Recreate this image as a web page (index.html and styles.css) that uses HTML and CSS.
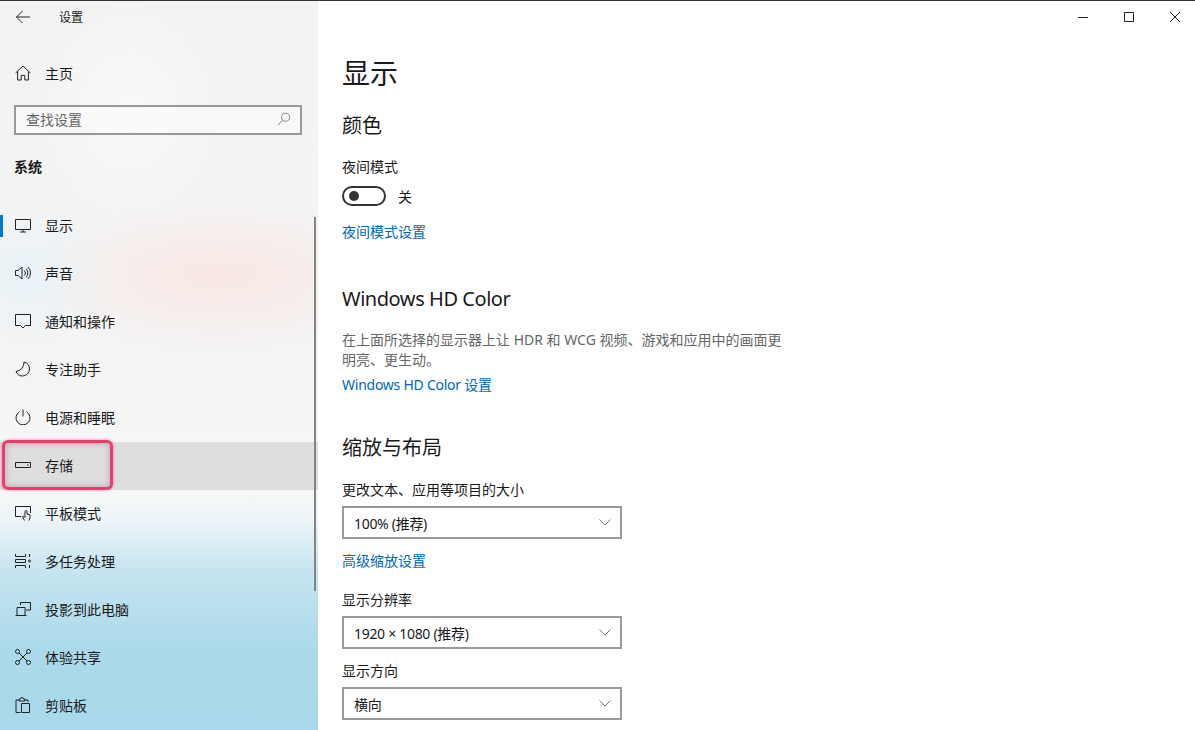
FILE: index.html

```html
<!DOCTYPE html>
<html lang="zh-CN">
    <head>
        <meta charset="UTF-8" />
        <title>设置</title>
        <link rel="stylesheet" href="styles.css">
    </head>
    <body>
        <div class="okno">
            <div class="bok">
                <div class="titulek">
                    <svg class="zpet" width="16" height="16" viewBox="0 0 16 16"><path d="M15 8H1.5M7.5 2 1.5 8l6 6"/></svg>
                    <span>设置</span>
                </div>
                <div class="polozka domu">
                    <svg viewBox="0 0 16 16"><path d="M.6 8 8 1l7.4 7M2.6 6.4V15h3.6v-4.6h3.6V15h3.6V6.4"/></svg>
                    <span>主页</span>
                </div>
                <div class="hledat">
                    <span>查找设置</span>
                    <svg viewBox="0 0 16 16"><circle cx="9.8" cy="6" r="4.6"/><path d="M6.5 9.3 1 15"/></svg>
                </div>
                <div class="skupina">系统</div>
                <div class="menu">
                    <div class="polozka aktivni">
                        <svg viewBox="0 0 16 16"><path d="M.5 2.5h15v10H.5zM8 12.5v2.5M5 15h6"/></svg>
                        <span>显示</span>
                    </div>
                    <div class="polozka">
                        <svg viewBox="0 0 16 16"><path d="M.5 5.500h2.500L7 2v12l-4-3.500H.5zM9.300 5.500a3.500 3.500 0 0 1 0 5M11 3.700a6 6 0 0 1 0 8.600M13 2a8.500 8.500 0 0 1 0 12"/></svg>
                        <span>声音</span>
                    </div>
                    <div class="polozka">
                        <svg viewBox="0 0 16 16"><path d="M.5 1.500h15v11h-5L8 15l-2.500-2.500h-5z"/></svg>
                        <span>通知和操作</span>
                    </div>
                    <div class="polozka">
                        <svg viewBox="0 0 16 16"><path d="M9 1a7.300 7.300 0 0 1 5.500 7 7 7 0 0 1-7 7 7.200 7.200 0 0 1-6.500-4.500A9 9 0 0 0 9 1z"/></svg>
                        <span>专注助手</span>
                    </div>
                    <div class="polozka">
                        <svg viewBox="0 0 16 16"><path d="M4.500 2.800a7 7 0 1 0 7 0M8 .5v7"/></svg>
                        <span>电源和睡眠</span>
                    </div>
                    <div class="polozka vybrana">
                        <svg viewBox="0 0 16 16"><path d="M.5 5.500h15v5H.5zM12 8h1.500"/></svg>
                        <span>存储</span>
                    </div>
                    <div class="polozka">
                        <svg viewBox="0 0 16 16"><path d="M6 11.500H.5v-10h15V8M9.500 15.500 7.500 11.500l1-.5 1.500 1.500V6.500a1 1 0 0 1 2 0V9l3 .8V13l-1 2.500"/></svg>
                        <span>平板模式</span>
                    </div>
                    <div class="polozka">
                        <svg viewBox="0 0 16 16"><path d="M.5 1v2.500h10V1M.5 15v-2.500h10V15M.5 6.500h10v3H.5zM14.500 1v3M14.500 12v3"/><circle cx="14.500" cy="8" r="1"/></svg>
                        <span>多任务处理</span>
                    </div>
                    <div class="polozka">
                        <svg viewBox="0 0 16 16"><path d="M5.500 4V1.500h10V9H11M.5 14.500h11M2 14.500V6.500h8v8"/></svg>
                        <span>投影到此电脑</span>
                    </div>
                    <div class="polozka">
                        <svg viewBox="0 0 16 16"><circle cx="2.500" cy="2.500" r="2"/><circle cx="13.500" cy="2.500" r="2"/><circle cx="2.500" cy="13.500" r="2"/><circle cx="13.500" cy="13.500" r="2"/><path d="m4 4 8 8M12 4l-8 8"/></svg>
                        <span>体验共享</span>
                    </div>
                    <div class="polozka">
                        <svg viewBox="0 0 16 16"><path d="M5.500 15.500H1V3h3M10 3h3v2M4 4V2h1.500a1.500 1.500 0 0 1 3 0H10v2zM6.500 6.500h8v9h-8z"/></svg>
                        <span>剪贴板</span>
                    </div>
                </div>
                <div class="posuvnik"></div>
                <div class="ramecek"></div>
            </div>

            <div class="obsah">
                <div class="ovladani">
                    <svg viewBox="0 0 12 12"><path d="M1 6.500h10"/></svg>
                    <svg viewBox="0 0 12 12"><path d="M1.500 1.500h9v9h-9z"/></svg>
                    <svg viewBox="0 0 12 12"><path d="m1 1 10 10M11 1 1 11"/></svg>
                </div>

                <h1>显示</h1>
                <h2 class="prvni">颜色</h2>
                <p class="popisek noc">夜间模式</p>
                <div class="prepinac">
                    <span class="kolejnice"><span class="tecka"></span></span>
                    <span>关</span>
                </div>
                <a class="odkaz" href="#">夜间模式设置</a>

                <h2 class="hd">Windows HD Color</h2>
                <p class="text">在上面所选择的显示器上让 HDR 和 WCG 视频、游戏和应用中的画面更明亮、更生动。</p>
                <a class="odkaz hned" href="#">Windows HD Color 设置</a>

                <h2 class="rozlozeni">缩放与布局</h2>
                <p class="popisek velikost">更改文本、应用等项目的大小</p>
                <div class="vyber">
                    <span>100% (推荐)</span>
                    <svg viewBox="0 0 12 7"><path d="m.5.5 5.500 5.500L11.500.5"/></svg>
                </div>
                <a class="odkaz pokrocile" href="#">高级缩放设置</a>
                <p class="popisek rozliseni">显示分辨率</p>
                <div class="vyber">
                    <span>1920 × 1080 (推荐)</span>
                    <svg viewBox="0 0 12 7"><path d="m.5.5 5.500 5.500L11.500.5"/></svg>
                </div>
                <p class="popisek smer">显示方向</p>
                <div class="vyber">
                    <span>横向</span>
                    <svg viewBox="0 0 12 7"><path d="m.5.5 5.500 5.500L11.500.5"/></svg>
                </div>
            </div>
        </div>
    </body>
</html>
```

FILE: styles.css

```css
body {
    margin: 0;
    font-family: "Noto Sans", "Noto Sans CJK SC", sans-serif;
    font-size: 14px;
    color: #1a1a1a;
    background-color: #fff;
}

svg {
    fill: none;
    stroke: #222;
    stroke-width: 1;
}

.okno {
    display: flex;
    height: 729px;
    overflow: hidden;
    border-top: 1px solid #333;
}

/* levy panel */
.bok {
    position: relative;
    flex: 0 0 318px;
    background:
        radial-gradient(ellipse 190px 75px at 220px 275px, #f8e7e3, rgba(248, 231, 227, 0)),
        radial-gradient(ellipse 90px 70px at 30px 275px, #e8f2f8, rgba(232, 242, 248, 0)),
        radial-gradient(ellipse 90px 110px at 130px 110px, #f9f9f7, rgba(249, 249, 247, 0)),
        linear-gradient(#f3f3f3 0, #f4f4f4 380px, #f8f8f8 480px, #eff6f8 515px, #c6e4f0 570px, #abd9ea 650px, #a9d8ea 100%);
}

.titulek {
    display: flex;
    align-items: center;
    height: 32px;
    padding-left: 15px;
    font-size: 12px;
}
.titulek span {
    margin-left: 28px;
}

.polozka {
    display: flex;
    align-items: center;
    height: 48px;
    padding-left: 15px;
}
.polozka svg {
    flex: none;
    width: 16px;
    height: 16px;
    margin-right: 14px;
    margin-bottom: 2px;
}
.polozka span {
    line-height: 20px;
}

.domu {
    height: 50px;
    margin-top: 16px;
    margin-bottom: 6px;
}

.hledat {
    display: flex;
    align-items: center;
    justify-content: space-between;
    box-sizing: border-box;
    width: 288px;
    height: 30px;
    margin-left: 14px;
    padding: 0 9px 2px 10px;
    border: 2px solid #999;
    background-color: #f9f9f9;
    color: #666;
}
.hledat svg {
    width: 14px;
    height: 14px;
    stroke: #777;
}

.skupina {
    margin: 22px 0 0 14px;
    height: 29px;
    line-height: 20px;
    font-weight: 700;
}

.menu {
    margin-top: 16px;
}

.aktivni {
    position: relative;
}
.aktivni::before {
    content: "";
    position: absolute;
    left: 0;
    top: 13px;
    width: 3px;
    height: 22px;
    background-color: #0078d7;
}

.vybrana {
    background-color: #dedede;
}

.posuvnik {
    position: absolute;
    left: 314px;
    top: 216px;
    width: 2px;
    height: 374px;
    background-color: #848484;
}

.ramecek {
    position: absolute;
    left: 2px;
    top: 439px;
    width: 111px;
    height: 50px;
    box-sizing: border-box;
    border: 3px solid #ee3a6f;
    border-radius: 6px;
    box-shadow: 0 0 3px rgba(236, 58, 110, .6), inset 0 0 6px rgba(0, 0, 0, .25);
}

/* prava cast */
.obsah {
    position: relative;
    flex: 1;
    padding-left: 24px;
}

.ovladani {
    position: absolute;
    top: 10px;
    right: 14px;
    display: flex;
    gap: 34px;
}
.ovladani svg {
    width: 12px;
    height: 12px;
}

h1, h2, p {
    margin: 0;
    font-weight: 400;
}

h1 {
    margin-top: 52px;
    font-size: 28px;
    line-height: 40px;
}

h2 {
    font-size: 20px;
    line-height: 28px;
}
.prvni {
    margin-top: 19px;
}
.hd {
    margin-top: 43px;
    letter-spacing: -.45px;
}
.rozlozeni {
    margin-top: 39px;
}

.popisek, .text, .odkaz {
    line-height: 20px;
}

.noc {
    margin-top: 17px;
}

.prepinac {
    display: flex;
    align-items: center;
    gap: 12px;
    height: 20px;
    margin-top: 9px;
}
.kolejnice {
    box-sizing: border-box;
    display: flex;
    align-items: center;
    width: 44px;
    height: 20px;
    padding-left: 5px;
    border: 2px solid #333;
    border-radius: 10px;
}
.tecka {
    width: 10px;
    height: 10px;
    border-radius: 50%;
    background-color: #333;
}

.odkaz {
    display: block;
    margin-top: 16px;
    color: #0067b8;
    text-decoration: none;
}
.hned {
    margin-top: 5px;
    letter-spacing: -.25px;
}
.pokrocile {
    margin-top: 12px;
}

.text {
    width: 445px;
    margin-top: 17px;
    color: #666;
}

.velikost {
    margin-top: 18px;
}
.rozliseni {
    margin-top: 19px;
}
.smer {
    margin-top: 12px;
}

.vyber {
    box-sizing: border-box;
    display: flex;
    align-items: center;
    justify-content: space-between;
    width: 280px;
    height: 33px;
    margin-top: 6px;
    padding: 0 9px 0 10px;
    border: 2px solid #999;
}
.vyber span {
    letter-spacing: -.3px;
}
.vyber svg {
    width: 12px;
    height: 7px;
    stroke: #777;
}
```
